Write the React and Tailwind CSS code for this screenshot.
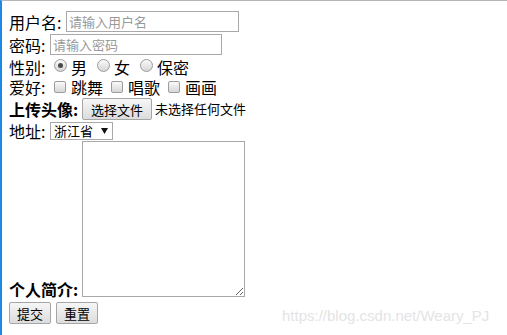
import { useState } from 'react';

function Radio({ checked }) {
  return (
    <span className="mb-[3px] inline-flex h-[13px] w-[13px] items-center justify-center rounded-full border border-[#9c9c9c] bg-gradient-to-b from-[#fafafa] to-[#d6d6d6]">
      {checked && <span className="h-[5px] w-[5px] rounded-full bg-[#4a4a4a]" />}
    </span>
  );
}

function Check() {
  return (
    <span className="inline-block h-[12px] w-[12px] rounded-[2px] border border-[#9c9c9c] bg-gradient-to-b from-[#fafafa] to-[#d6d6d6]" />
  );
}

const btn =
  'h-[22px] rounded-[2px] border border-[#a6a6a6] bg-gradient-to-b from-[#f6f6f6] to-[#dcdcdc] text-[13px] leading-none text-black';

function App() {
  const [gender] = useState('男');

  return (
    <div className="relative h-[335px] w-[507px] overflow-hidden border-l-2 border-t border-l-[#1e88e5] border-t-[#b4b4b4] bg-white pl-[7px] pt-[9px] font-['Noto_Sans_CJK_SC',sans-serif] text-[16px] leading-[18px] text-black">
      {/* 用户名 */}
      <div className="flex h-[23px] items-center">
        <span className="w-[57px] shrink-0">用户名:</span>
        <input
          type="text"
          placeholder="请输入用户名"
          className="h-[21px] w-[173px] border border-[#a9a9a9] px-[2px] text-[13px] outline-none placeholder:text-[#9a9a9a]"
        />
      </div>

      {/* 密码 */}
      <div className="flex h-[23px] items-center">
        <span className="w-[41px] shrink-0">密码:</span>
        <input
          type="password"
          placeholder="请输入密码"
          className="h-[21px] w-[172px] border border-[#a9a9a9] px-[2px] text-[13px] outline-none placeholder:text-[#9a9a9a]"
        />
      </div>

      {/* 性别 */}
      <div className="flex h-[21px] items-center">
        <span className="w-[45px] shrink-0">性别:</span>
        {['男', '女', '保密'].map((g) => (
          <label key={g} className="mr-[10px] flex items-center gap-[4px]">
            <Radio checked={gender === g} />
            <span>{g}</span>
          </label>
        ))}
      </div>

      {/* 爱好 */}
      <div className="flex h-[20px] items-center">
        <span className="w-[45px] shrink-0">爱好:</span>
        {['跳舞', '唱歌', '画画'].map((h) => (
          <label key={h} className="mr-[8px] flex items-center gap-[5px]">
            <Check />
            <span>{h}</span>
          </label>
        ))}
      </div>

      {/* 上传头像 */}
      <div className="flex h-[24px] items-center">
        <span className="w-[73px] shrink-0 font-bold">上传头像:</span>
        <button className={`${btn} w-[70px]`}>选择文件</button>
        <span className="ml-[3px] text-[13px]">未选择任何文件</span>
      </div>

      {/* 地址 */}
      <div className="flex h-[20px] items-center">
        <span className="w-[41px] shrink-0">地址:</span>
        <div className="relative flex h-[18px] w-[63px] items-center">
          <select className="block h-[18px] w-[63px] appearance-none border border-[#a9a9a9] bg-white py-0 pl-[3px] text-[13px] leading-[16px] outline-none">
            <option>浙江省</option>
            <option>江苏省</option>
            <option>上海市</option>
          </select>
          <svg className="pointer-events-none absolute left-[51px] top-[6px]" width="7" height="6" viewBox="0 0 7 6">
            <polygon points="0,0 7,0 3.5,6" fill="#111" />
          </svg>
        </div>
      </div>

      {/* 个人简介 */}
      <div className="flex items-end">
        <span className="mb-[-1px] w-[73px] shrink-0 font-bold leading-[17px]">个人简介:</span>
        <textarea className="h-[156px] w-[163px] resize border border-[#a9a9a9] outline-none" />
      </div>

      {/* buttons */}
      <div className="mt-[5px] flex gap-[5px]">
        <button className={`${btn} w-[42px]`}>提交</button>
        <button className={`${btn} w-[42px]`}>重置</button>
      </div>

      <div className="pointer-events-none absolute left-[280px] top-[306px] font-['Liberation_Sans',sans-serif] text-[15px] leading-[18px] text-[#e4e4e4]">
        https://blog.csdn.net/Weary_PJ
      </div>
    </div>
  );
}

export default App;
